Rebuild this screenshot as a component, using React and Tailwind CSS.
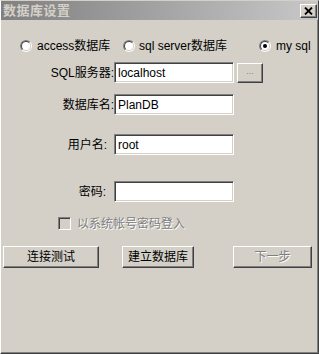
import React from "react";

const font = "font-['Liberation_Sans','Noto_Sans_CJK_SC',sans-serif]";

function Radio({ checked }) {
  return (
    <div className="w-[12px] h-[12px] rounded-full border border-t-[#808080] border-l-[#808080] border-r-white border-b-white shrink-0">
      <div className="w-full h-full rounded-full border border-t-[#404040] border-l-[#404040] border-r-[#d4d0c8] border-b-[#d4d0c8] bg-white flex items-center justify-center">
        {checked && <div className="w-[4px] h-[4px] rounded-full bg-black" />}
      </div>
    </div>
  );
}

function Input({ value }) {
  return (
    <div className="w-[120px] h-[21px] border border-t-[#808080] border-l-[#808080] border-r-white border-b-white bg-white shadow-[inset_1px_1px_0_#404040,inset_-1px_-1px_0_#d4d0c8] flex items-center pl-[3px] text-[12px] text-black leading-none">
      {value}
    </div>
  );
}

function Button({ children, w, disabled }) {
  return (
    <div
      className={`${w} h-[22px] border border-t-white border-l-white border-r-[#404040] border-b-[#404040] shadow-[inset_-1px_-1px_0_#808080] flex items-center justify-center text-[12px] leading-none ${
        disabled ? "text-[#808080] [text-shadow:1px_1px_0_#ffffff]" : "text-black"
      }`}
    >
      {children}
    </div>
  );
}

export default function App() {
  return (
    <div
      className={`${font} w-[319px] h-[354px] bg-[#d4d0c8] border border-t-[#d4d0c8] border-l-white border-r-[#404040] border-b-[#404040] shadow-[inset_-1px_-1px_0_#808080] flex flex-col overflow-hidden`}
    >
      {/* title bar */}
      <div className="h-[19px] bg-gradient-to-r from-[#808080] to-[#c8c8c8] flex items-center justify-between pl-[2px] pr-[1px]">
        <span className="text-[13px] font-bold text-[#d4d0c8] leading-none tracking-[0.5px]">
          数据库设置
        </span>
        <div className="w-[17px] h-[14px] bg-[#d4d0c8] border border-t-white border-l-white border-r-[#404040] border-b-[#404040] shadow-[inset_-1px_-1px_0_#808080] flex items-center justify-center">
          <svg width="9" height="8" viewBox="0 0 9 8">
            <path d="M1 0.5 L8 7.5 M8 0.5 L1 7.5" stroke="#000" strokeWidth="1.8" />
          </svg>
        </div>
      </div>

      {/* radios */}
      <div className="mt-[19px] h-[14px] flex items-center pl-[19px] text-[12px] text-black leading-none">
        <div className="w-[103px] flex items-center gap-[5px]">
          <Radio />
          <span>access数据库</span>
        </div>
        <div className="w-[136px] flex items-center gap-[4px]">
          <Radio />
          <span>sql server数据库</span>
        </div>
        <div className="flex items-center gap-[5px]">
          <Radio checked />
          <span>my sql</span>
        </div>
      </div>

      {/* form rows */}
      <div className="mt-[9px] flex items-center text-[12px] text-black">
        <div className="w-[113px] text-right leading-none">SQL服务器:</div>
        <Input value="localhost" />
        <div className="ml-[3px] w-[26px] h-[20px] border border-t-white border-l-white border-r-[#404040] border-b-[#404040] shadow-[inset_-1px_-1px_0_#808080] flex items-center justify-center text-[9px] text-[#808080] leading-none pb-[2px]">
          ...
        </div>
      </div>
      <div className="mt-[11px] flex items-center text-[12px] text-black">
        <div className="w-[113px] text-right leading-none">数据库名:</div>
        <Input value="PlanDB" />
      </div>
      <div className="mt-[19px] flex items-center text-[12px] text-black">
        <div className="w-[113px] text-right leading-none pr-[7px]">用户名:</div>
        <Input value="root" />
      </div>
      <div className="mt-[26px] flex items-center text-[12px] text-black">
        <div className="w-[113px] text-right leading-none pr-[8px]">密码:</div>
        <Input value="" />
      </div>

      {/* checkbox */}
      <div className="mt-[15px] h-[13px] flex items-center pl-[57px] gap-[6px] text-[12px] leading-none">
        <div className="w-[13px] h-[13px] border border-t-[#808080] border-l-[#808080] border-r-white border-b-white shadow-[inset_1px_1px_0_#404040,inset_-1px_-1px_0_#d4d0c8] bg-[#d4d0c8]" />
        <span className="text-[#808080] [text-shadow:1px_1px_0_#ffffff]">以系统帐号密码登入</span>
      </div>

      {/* buttons */}
      <div className="mt-[16px] flex items-center pl-[2px]">
        <Button w="w-[96px]">连接测试</Button>
        <div className="ml-[23px]">
          <Button w="w-[72px]">建立数据库</Button>
        </div>
        <div className="ml-[39px]">
          <Button w="w-[79px]" disabled>
            下一步
          </Button>
        </div>
      </div>
    </div>
  );
}
